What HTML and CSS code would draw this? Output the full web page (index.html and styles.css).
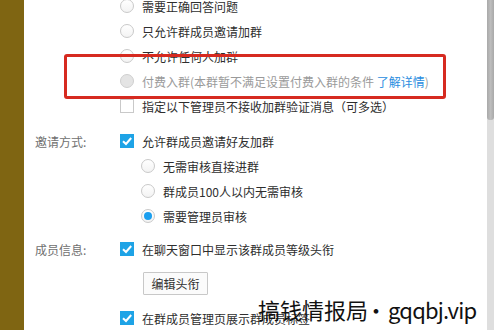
FILE: index.html
```html
<!DOCTYPE html>
<html lang="zh-CN">
<head>
<meta charset="utf-8">
<link rel="stylesheet" href="styles.css">
</head>
<body>
<div class="frame">
  <div class="band"></div>
  <div class="main">
    <div class="content">
      <div class="section first">
        <div class="label"></div>
        <div class="opts">
          <div class="row"><span class="radio"></span><span>需要正确回答问题</span></div>
          <div class="row"><span class="radio"></span><span>只允许群成员邀请加群</span></div>
          <div class="row"><span class="radio"></span><span>不允许任何人加群</span></div>
          <div class="row disabled"><span class="radio off"></span><span>付费入群(本群暂不满足设置付费入群的条件 <span class="link">了解详情</span>)</span></div>
          <div class="row"><span class="check"></span><span>指定以下管理员不接收加群验证消息（可多选）</span></div>
        </div>
      </div>
      <div class="section invite">
        <div class="label">邀请方式:</div>
        <div class="opts">
          <div class="row"><span class="check on"><svg viewBox="0 0 14 14" width="14" height="14"><path d="M3 7.2 L6 10 L11.2 4" fill="none" stroke="#fff" stroke-width="2"/></svg></span><span>允许群成员邀请好友加群</span></div>
          <div class="row sub"><span class="radio"></span><span>无需审核直接进群</span></div>
          <div class="row sub"><span class="radio"></span><span>群成员100人以内无需审核</span></div>
          <div class="row sub"><span class="radio sel"></span><span>需要管理员审核</span></div>
        </div>
      </div>
      <div class="section member">
        <div class="label">成员信息:</div>
        <div class="opts">
          <div class="row"><span class="check on"><svg viewBox="0 0 14 14" width="14" height="14"><path d="M3 7.2 L6 10 L11.2 4" fill="none" stroke="#fff" stroke-width="2"/></svg></span><span>在聊天窗口中显示该群成员等级头衔</span></div>
          <div class="btnrow"><button class="btn">编辑头衔</button></div>
          <div class="row"><span class="check on"><svg viewBox="0 0 14 14" width="14" height="14"><path d="M3 7.2 L6 10 L11.2 4" fill="none" stroke="#fff" stroke-width="2"/></svg></span><span>在群成员管理页展示群成员标签</span></div>
        </div>
      </div>
    </div>
    <div class="mark"></div>
  </div>
  <div class="scroll"><div class="thumb"></div></div>
  <div class="edge"></div>
</div>
<div class="watermark">搞钱情报局<span class="dot">・</span><span class="latin">gqqbj.vip</span></div>
</body>
</html>
```
FILE: styles.css
```css
html, body {
  margin: 0;
  padding: 0;
  background: #fff;
}
body {
  width: 498px;
  height: 330px;
  overflow: hidden;
  position: relative;
  font-family: "Noto Sans CJK SC", "Noto Sans", sans-serif;
  font-size: 12px;
  color: #2e2e2e;
}
.frame {
  display: flex;
  height: 330px;
}
.band {
  width: 24px;
  flex: none;
  background: #7f6512;
}
.main {
  flex: 1;
  position: relative;
  overflow: hidden;
}
.content {
  margin-top: -6.5px;
  padding-left: 11px;
}
.section {
  display: grid;
  grid-template-columns: 85px 1fr;
}
.label {
  color: #707070;
  height: 25px;
  line-height: 25px;
}
.invite {
  margin-top: 10px;
}
.member {
  margin-top: 8px;
}
.row {
  height: 25px;
  display: flex;
  align-items: center;
  gap: 8px;
  white-space: nowrap;
}
.row.sub {
  padding-left: 21px;
}
.disabled {
  color: #9a9a9a;
}
.link {
  color: #2a8de0;
}
.radio {
  width: 12px;
  height: 12px;
  border: 1px solid #c9c9c9;
  border-radius: 50%;
  background: linear-gradient(#fff, #f3f3f3);
  flex: none;
  position: relative;
}
.radio.off {
  background: #e4e4e4;
  border-color: #cfcfcf;
}
.radio.sel::after {
  content: "";
  position: absolute;
  left: 2px;
  top: 2px;
  width: 8px;
  height: 8px;
  border-radius: 50%;
  background: #1b9fef;
}
.check {
  width: 12px;
  height: 12px;
  border: 1px solid #c9c9c9;
  background: #fff;
  flex: none;
  display: flex;
}
.check.on {
  width: 14px;
  height: 14px;
  border: none;
  background: #1ea3e6;
}
.btnrow {
  padding-top: 10.5px;
  padding-bottom: 10.5px;
  padding-left: 23px;
}
.btn {
  display: block;
  height: 23px;
  width: 65px;
  padding: 0;
  border: 1px solid #c8c8c8;
  background: #fbfbfb;
  font-family: inherit;
  font-size: 12px;
  color: #333;
  border-radius: 1px;
}
.mark {
  position: absolute;
  left: 40px;
  top: 54px;
  width: 376px;
  height: 39px;
  border: 3px solid #d62a20;
  border-radius: 3px;
}
.scroll {
  width: 7px;
  flex: none;
  background: #dedede;
}
.thumb {
  height: 120px;
  background: linear-gradient(90deg, #a9a9a9, #bdbdbd 50%, #a9a9a9);
  border-radius: 0 0 3px 3px;
}
.edge {
  width: 4px;
  flex: none;
  background: #fff;
}
.watermark {
  position: absolute;
  left: 258px;
  top: 298px;
  font-size: 22px;
  line-height: 22px;
  color: #111;
  white-space: nowrap;
}
.dot {
  display: inline-block;
  width: 24px;
  text-align: center;
  margin-left: -4px;
}
.latin {
  letter-spacing: -0.8px;
}
```
